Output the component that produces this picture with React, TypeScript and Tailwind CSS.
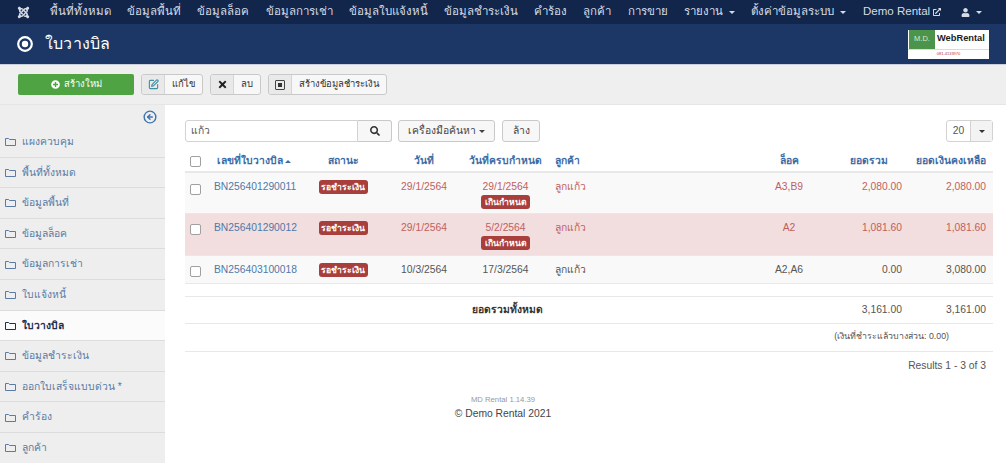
import { CircleArrowLeft, SquarePen } from "lucide-react"
import {
  FaExternalLinkAlt,
  FaJoomla,
  FaPlusCircle,
  FaSearch,
  FaTimes,
  FaUser,
} from "react-icons/fa"

const thaiFont = "font-['Liberation_Sans','Noto_Sans',sans-serif]"

const navItems = [
  "พื้นที่ทั้งหมด",
  "ข้อมูลพื้นที่",
  "ข้อมูลล็อค",
  "ข้อมูลการเช่า",
  "ข้อมูลใบแจ้งหนี้",
  "ข้อมูลชำระเงิน",
  "คำร้อง",
  "ลูกค้า",
  "การขาย",
]

const sideItems = [
  "แผงควบคุม",
  "พื้นที่ทั้งหมด",
  "ข้อมูลพื้นที่",
  "ข้อมูลล็อค",
  "ข้อมูลการเช่า",
  "ใบแจ้งหนี้",
  "ใบวางบิล",
  "ข้อมูลชำระเงิน",
  "ออกใบเสร็จแบบด่วน *",
  "คำร้อง",
  "ลูกค้า",
]

const rows = [
  { no: "BN256401290011", date: "29/1/2564", due: "29/1/2564", lot: "A3,B9", total: "2,080.00", left: "2,080.00", late: true, tone: "bg-[#f9f9f9] text-[#c0605e]", h: "h-[41px]" },
  { no: "BN256401290012", date: "29/1/2564", due: "5/2/2564", lot: "A2", total: "1,081.60", left: "1,081.60", late: true, tone: "bg-[#f2dede] text-[#c0605e]", h: "h-[42px]" },
  { no: "BN256403100018", date: "10/3/2564", due: "17/3/2564", lot: "A2,A6", total: "0.00", left: "3,080.00", late: false, tone: "bg-[#f9f9f9] text-[#555555]", h: "h-[28px]" },
]

function Caret() {
  return <span className="ml-[6px] inline-block border-x-[3px] border-t-[3px] border-x-transparent border-t-current align-middle" />
}

function Badge({ children }: { children: string }) {
  return (
    <span className="inline-block w-[49px] rounded-[3px] bg-[#a83f3d] text-center text-[8.6px] leading-[14px] font-bold whitespace-nowrap text-white">
      {children}
    </span>
  )
}

function Check() {
  return <span className="inline-block size-[11px] rounded-[2px] border border-[#a0a0a0] bg-white align-middle" />
}

function FolderIcon() {
  return (
    <svg viewBox="0 0 11 9" className="h-[9px] w-[11px] shrink-0" fill="none" stroke="currentColor" strokeWidth="1">
      <path d="M.5 1.5h3.2l.8 1h6v6H.5z" />
    </svg>
  )
}

function ToolButton({ icon, label }: { icon: React.ReactNode; label: string }) {
  return (
    <div className="flex h-[21px] items-center rounded-[3px] border border-[#c9c9c9] bg-[#f7f7f7] text-[9.5px] text-[#333333]">
      <span className="flex h-full w-[23px] items-center justify-center rounded-l-[3px] border-r border-[#d5d5d5] bg-[#e9e9e9]">
        {icon}
      </span>
      <span className="px-[7px]">{label}</span>
    </div>
  )
}

export default function App() {
  return (
    <div className={`flex h-[463px] w-[1006px] flex-col overflow-hidden bg-white ${thaiFont}`}>
      <nav className="flex h-[24px] shrink-0 items-center bg-[#11264a] pl-[17px] text-[11.5px] text-[#d6dce6]">
        <FaJoomla className="mr-[20px] size-[13px] text-[#d6dce6]" />
        <div className="flex items-center gap-[16.2px]">
          {navItems.map((item) => (
            <span key={item}>{item}</span>
          ))}
          <span>
            รายงาน
            <Caret />
          </span>
          <span>
            ตั้งค่าข้อมูลระบบ
            <Caret />
          </span>
          <span className="ml-[1px] flex items-center gap-[3px]">
            Demo Rental
            <FaExternalLinkAlt className="size-[8px]" />
          </span>
        </div>
        <span className="ml-[20px] flex items-center">
          <FaUser className="size-[9px]" />
          <Caret />
        </span>
      </nav>

      <header className="flex h-[41px] shrink-0 items-center justify-between border-b border-[#c9d0da] bg-[#1c3766] pr-[17px] pl-[17px] text-white">
        <div className="flex items-center gap-[12px]">
          <svg viewBox="0 0 16 16" className="size-[16px]" fill="none">
            <circle cx="8" cy="8" r="6.8" stroke="currentColor" strokeWidth="2.2" />
            <circle cx="8" cy="8" r="3.2" fill="currentColor" />
          </svg>
          <h1 className="text-[16px] font-normal tracking-[0.2px]">ใบวางบิล</h1>
        </div>
        <div className="flex h-[29px] w-[81px] flex-col bg-white">
          <div className="flex h-[20px] items-center gap-[2px] border-b border-[#cfe3cf] pl-px">
            <span className="flex h-full w-[26px] items-center justify-center bg-[#4b9449] text-[7.5px] text-[#d7e8d6]">M.D.</span>
            <span className="text-[9.3px] font-bold text-[#1d1d1d]">WebRental</span>
          </div>
          <span className="text-center text-[4px] leading-[8px] text-[#b33]">081-4133970</span>
        </div>
      </header>

      <div className="flex h-[40px] shrink-0 items-center gap-[7px] border-b border-[#e6e6e6] bg-[#efefef] pl-[18px]">
        <button className="flex h-[21px] w-[116px] items-center justify-center gap-[4px] rounded-[2px] bg-[#4fa343] text-[9.5px] text-white">
          <FaPlusCircle className="size-[9px]" />
          สร้างใหม่
        </button>
        <ToolButton icon={<SquarePen className="size-[11px] text-[#3f8ea3]" strokeWidth={2.4} />} label="แก้ไข" />
        <ToolButton icon={<FaTimes className="size-[11px] text-[#222222]" />} label="ลบ" />
        <ToolButton
          icon={
            <span className="flex size-[10px] items-center justify-center rounded-[1px] border border-[#444444]">
              <span className="size-[4px] bg-[#333333]" />
            </span>
          }
          label="สร้างข้อมูลชำระเงิน"
        />
      </div>

      <div className="flex min-h-0 flex-1">
        <aside className="w-[165px] shrink-0 bg-[#eeeeee]">
          <div className="flex h-[22px] items-start justify-end pt-[5px] pr-[8px]">
            <CircleArrowLeft className="size-[14px] text-[#3d74ad]" strokeWidth={2.4} />
          </div>
          <ul>
            {sideItems.map((item) => {
              const active = item === "ใบวางบิล"
              return (
                <li
                  key={item}
                  className={`flex h-[30.6px] items-center gap-[6px] border-b-[1.5px] border-[#dcdcdc] pl-[5px] text-[10.3px] ${
                    active ? "bg-[#fbfbfb] font-bold text-[#1c2f4f]" : "text-[#5b7ba6]"
                  }`}
                >
                  <FolderIcon />
                  {item}
                </li>
              )
            })}
          </ul>
        </aside>

        <main className="flex-1 pt-[15px] pr-[13px] pl-[20px] text-[10.3px] text-[#555555]">
          <div className="flex h-[22px] items-stretch">
            <div className="flex w-[173px] items-center rounded-l-[3px] border border-[#d2d2d2] pl-[5px] text-[#555555]">แก้ว</div>
            <div className="flex w-[34px] items-center justify-center rounded-r-[3px] border border-l-0 border-[#c9c9c9] bg-[#f7f7f7]">
              <FaSearch className="size-[10px] text-[#333333]" />
            </div>
            <div className="ml-[6px] flex w-[97px] items-center justify-center rounded-[3px] border border-[#c9c9c9] bg-[#f7f7f7] text-[#444444]">
              เครื่องมือค้นหา
              <span className="ml-[3px] inline-block border-x-[3px] border-t-[3px] border-x-transparent border-t-current" />
            </div>
            <div className="ml-[7px] flex w-[38px] items-center justify-center rounded-[3px] border border-[#c9c9c9] bg-[#f7f7f7] text-[#444444]">ล้าง</div>
            <div className="ml-auto flex w-[47px] items-stretch rounded-[3px] border border-[#d2d2d2]">
              <span className="flex flex-1 items-center justify-center">20</span>
              <span className="flex w-[22px] items-center justify-center border-l border-[#d2d2d2] bg-[#f3f3f3] text-[#333333]">
                <span className="inline-block border-x-[3px] border-t-[3px] border-x-transparent border-t-current" />
              </span>
            </div>
          </div>

          <table className="mt-[8px] w-full table-fixed border-collapse">
            <colgroup>
              <col className="w-[21px]" />
              <col className="w-[95px]" />
              <col className="w-[84px]" />
              <col className="w-[78px]" />
              <col className="w-[85px]" />
              <col className="w-[192px]" />
              <col className="w-[98px]" />
              <col className="w-[72px]" />
              <col className="w-[83px]" />
            </colgroup>
            <thead>
              <tr className="h-[22px] border-b-2 border-[#e8e8e8] font-bold text-[#3d6ca5]">
                <th className="text-center"><Check /></th>
                <th className="pl-[1px] text-center whitespace-nowrap">
                  เลขที่ใบวางบิล
                  <span className="ml-[2px] inline-block border-x-[3px] border-b-[3px] border-x-transparent border-b-current align-middle" />
                </th>
                <th className="text-center">สถานะ</th>
                <th className="text-center">วันที่</th>
                <th className="whitespace-nowrap text-center">วันที่ครบกำหนด</th>
                <th className="pl-[7px] text-left">ลูกค้า</th>
                <th className="text-center">ล็อค</th>
                <th className="pr-[22px] text-right">ยอดรวม</th>
                <th className="pr-[7px] text-right whitespace-nowrap">ยอดเงินคงเหลือ</th>
              </tr>
            </thead>
            <tbody>
              {rows.map((row) => (
                <tr key={row.no} className={`${row.h} border-b border-[#e8e8e8] align-top ${row.tone}`}>
                  <td className="pt-[8px] text-center"><Check /></td>
                  <td className="pt-[6px] pl-[8px] text-[#4f79a8]">{row.no}</td>
                  <td className="pt-[6px] text-center"><Badge>รอชำระเงิน</Badge></td>
                  <td className="pt-[6px] text-center">{row.date}</td>
                  <td className="pt-[6px] text-center">
                    <div>{row.due}</div>
                    {row.late && <Badge>เกินกำหนด</Badge>}
                  </td>
                  <td className="pt-[6px] pl-[7px]">ลูกแก้ว</td>
                  <td className="pt-[6px] text-center">{row.lot}</td>
                  <td className="pt-[6px] pr-[8px] text-right">{row.total}</td>
                  <td className="pt-[6px] pr-[7px] text-right">{row.left}</td>
                </tr>
              ))}
            </tbody>
          </table>

          <div className="mt-[12px] flex h-[28px] items-center border-y border-[#e8e8e8]">
            <span className="w-[358px] text-right font-bold text-[#333333]">ยอดรวมทั้งหมด</span>
            <span className="ml-auto pr-[44px]">3,161.00</span>
            <span className="pr-[7px]">3,161.00</span>
          </div>
          <div className="flex h-[28px] items-center justify-end border-b border-[#e8e8e8] pr-[44px] text-[8.8px]">
            (เงินที่ชำระแล้วบางส่วน: 0.00)
          </div>
          <div className="mt-[6px] pr-[7px] text-right">Results 1 - 3 of 3</div>

          <footer className="mt-[21px] w-[636px] text-center">
            <div className="text-[7.7px] leading-[12px] text-[#999999]">MD Rental 1.14.39</div>
            <div className="leading-[16px] text-[#444444]">© Demo Rental 2021</div>
          </footer>
        </main>
      </div>
    </div>
  )
}
